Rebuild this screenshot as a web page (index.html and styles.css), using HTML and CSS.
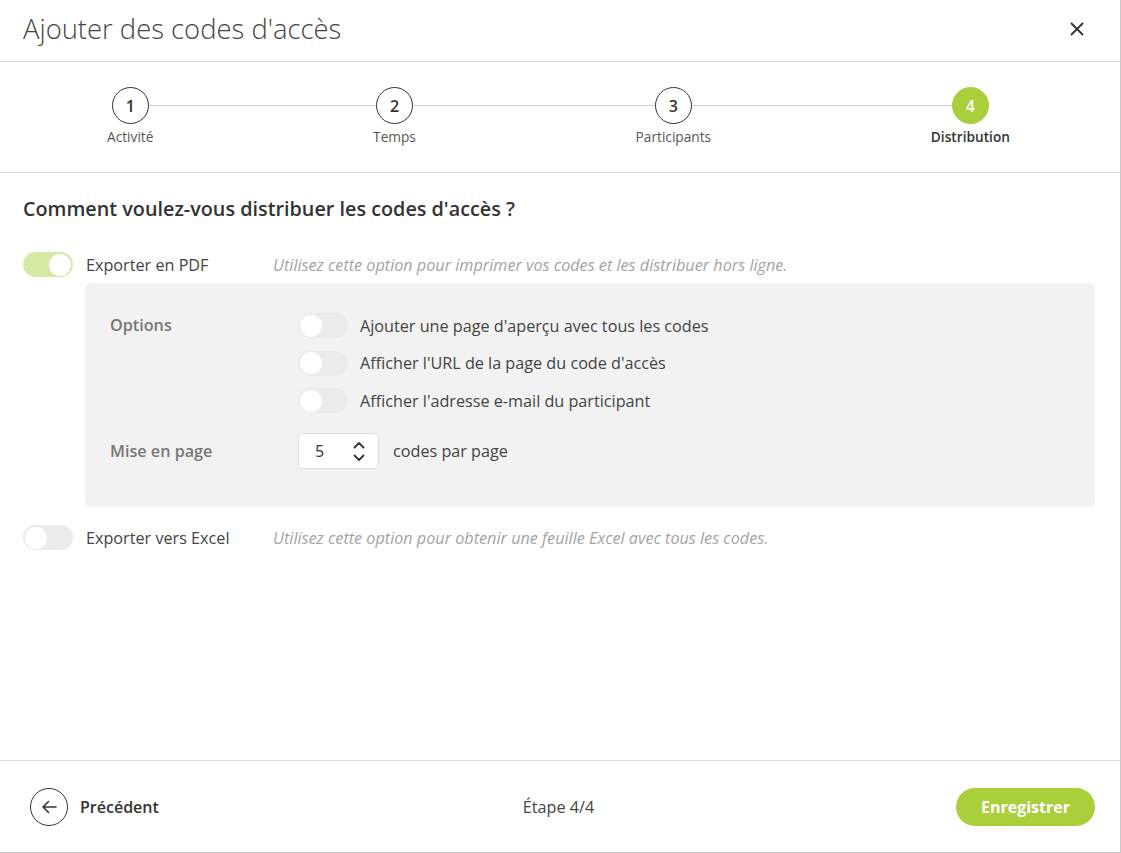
FILE: index.html
```html
<!DOCTYPE html>
<html lang="fr">
<head>
<meta charset="utf-8">
<title>Ajouter des codes d'accès</title>
<link rel="stylesheet" href="styles.css">
</head>
<body>
<div class="modal">
  <header class="modal-header">
    <h1 class="modal-title">Ajouter des codes d'accès</h1>
    <button class="close-btn" aria-label="Fermer">
      <svg width="14" height="14" viewBox="0 0 14 14"><path d="M1.5 1.5 L12.5 12.5 M12.5 1.5 L1.5 12.5" stroke="#333" stroke-width="1.8" stroke-linecap="round" fill="none"/></svg>
    </button>
  </header>

  <nav class="stepper">
    <div class="step"><span class="step-circle">1</span><span class="step-label">Activité</span></div>
    <div class="step"><span class="step-circle">2</span><span class="step-label">Temps</span></div>
    <div class="step"><span class="step-circle">3</span><span class="step-label">Participants</span></div>
    <div class="step step-active"><span class="step-circle">4</span><span class="step-label">Distribution</span></div>
  </nav>

  <main class="content">
    <h2 class="question">Comment voulez-vous distribuer les codes d'accès ?</h2>

    <div class="export-row">
      <span class="toggle toggle-on"><span class="knob"></span></span>
      <span class="export-label">Exporter en PDF</span>
      <span class="export-desc">Utilisez cette option pour imprimer vos codes et les distribuer hors ligne.</span>
    </div>

    <div class="options-box">
      <div class="opt-row">
        <div class="opt-title">Options</div>
        <div class="opt-list">
          <div class="opt-item"><span class="toggle"><span class="knob"></span></span><span>Ajouter une page d'aperçu avec tous les codes</span></div>
          <div class="opt-item"><span class="toggle"><span class="knob"></span></span><span>Afficher l'URL de la page du code d'accès</span></div>
          <div class="opt-item"><span class="toggle"><span class="knob"></span></span><span>Afficher l'adresse e-mail du participant</span></div>
        </div>
      </div>
      <div class="opt-row opt-row-layout">
        <div class="opt-title">Mise en page</div>
        <div class="layout-ctrl">
          <div class="num-input">
            <span class="num-val">5</span>
            <span class="spin">
              <svg width="12" height="8" viewBox="0 0 12 8"><path d="M1.5 6.5 L6 2 L10.5 6.5" stroke="#333" stroke-width="1.8" fill="none" stroke-linecap="round" stroke-linejoin="round"/></svg>
              <svg width="12" height="8" viewBox="0 0 12 8"><path d="M1.5 1.5 L6 6 L10.5 1.5" stroke="#333" stroke-width="1.8" fill="none" stroke-linecap="round" stroke-linejoin="round"/></svg>
            </span>
          </div>
          <span class="per-page">codes par page</span>
        </div>
      </div>
    </div>

    <div class="export-row export-excel">
      <span class="toggle"><span class="knob"></span></span>
      <span class="export-label">Exporter vers Excel</span>
      <span class="export-desc">Utilisez cette option pour obtenir une feuille Excel avec tous les codes.</span>
    </div>
  </main>

  <footer class="modal-footer">
    <div class="back">
      <span class="back-circle">
        <svg width="16" height="14" viewBox="0 0 16 14"><path d="M15 7 H2 M7.5 1.5 L2 7 L7.5 12.5" stroke="#333" stroke-width="1.6" fill="none" stroke-linecap="round" stroke-linejoin="round"/></svg>
      </span>
      <span class="back-label">Précédent</span>
    </div>
    <div class="step-count">Étape 4/4</div>
    <div class="save-wrap"><button class="save-btn">Enregistrer</button></div>
  </footer>
</div>
</body>
</html>
```

FILE: styles.css
```css
* { box-sizing: border-box; }
html, body { margin: 0; padding: 0; background: #fff; }
body {
  font-family: "Open Sans", "Noto Sans", sans-serif;
  color: #444;
}
.modal {
  width: 1121px;
  height: 853px;
  display: flex;
  flex-direction: column;
  border-right: 1px solid #c8c8c8;
  border-bottom: 1px solid #c8c8c8;
  background: #fff;
}
.modal-header {
  height: 62px;
  flex: none;
  display: flex;
  align-items: center;
  justify-content: space-between;
  padding: 0 36px 0 23px;
  border-bottom: 1px solid #d6d6d6;
}
.modal-title {
  margin: 0;
  font-size: 27.4px;
  font-weight: 300;
  color: #444;
  line-height: 1;
  padding-bottom: 4px;
}
.close-btn {
  border: 0;
  background: none;
  padding: 0;
  width: 14px;
  height: 14px;
  display: flex;
  margin-bottom: 4px;
}

.stepper {
  position: relative;
  height: 111px;
  flex: none;
  display: flex;
  justify-content: space-between;
  align-items: flex-start;
  padding: 25px 110px 0 107px;
  border-bottom: 1px solid #d6d6d6;
}
.stepper::before {
  content: "";
  position: absolute;
  left: 130px;
  right: 150px;
  top: 43px;
  height: 1px;
  background: #cfcfcf;
}
.step {
  position: relative;
  display: flex;
  flex-direction: column;
  align-items: center;
}
.step-circle {
  width: 37px;
  height: 37px;
  border-radius: 50%;
  border: 1px solid #333;
  background: #fff;
  display: flex;
  align-items: center;
  justify-content: center;
  font-size: 16px;
  font-weight: 600;
  color: #333;
}
.step-label {
  margin-top: 4px;
  font-size: 13.7px;
  line-height: 18px;
  color: #555;
}
.step-active .step-circle {
  background: #a9cf3b;
  border-color: #a9cf3b;
  color: #fff;
}
.step-active .step-label {
  font-weight: 600;
  color: #333;
}

.content {
  flex: 1;
  padding: 24px 25px 0 23px;
}
.question {
  margin: 0 0 31px;
  font-size: 19.8px;
  line-height: 24px;
  font-weight: 600;
  color: #333;
}
.export-row {
  display: flex;
  align-items: center;
  height: 25px;
}
.toggle {
  position: relative;
  flex: none;
  width: 50px;
  height: 25px;
  border-radius: 13px;
  background: #ebebeb;
  display: flex;
  align-items: center;
  padding: 0 2px;
}
.knob {
  width: 22px;
  height: 22px;
  border-radius: 50%;
  background: #fff;
}
.toggle-on {
  background: #d6e9a4;
  justify-content: flex-end;
}
.export-label {
  width: 187px;
  margin-left: 13px;
  font-size: 16.2px;
  line-height: 22px;
  color: #444;
  flex: none;
}
.export-desc {
  font-size: 16.2px;
  line-height: 22px;
  font-style: italic;
  color: #a3a3a3;
}
.options-box {
  margin: 6px 0 18px 62px;
  background: #f1f2f1;
  border-radius: 6px;
  padding: 30px 25px 38px;
}
.opt-row {
  display: flex;
}
.opt-title {
  width: 188px;
  flex: none;
  font-size: 16.2px;
  font-weight: 600;
  color: #777;
  line-height: 25px;
}
.opt-list {
  display: flex;
  flex-direction: column;
  gap: 12.5px;
}
.opt-item {
  display: flex;
  align-items: center;
  gap: 12px;
  height: 25px;
  font-size: 16.2px;
  line-height: 22px;
  color: #444;
}
.opt-row-layout {
  margin-top: 20px;
  align-items: center;
}
.layout-ctrl {
  display: flex;
  align-items: center;
  gap: 14px;
}
.num-input {
  width: 81px;
  height: 36px;
  background: #fff;
  border: 1px solid #dcdcdc;
  border-radius: 4px;
  display: flex;
  align-items: center;
  justify-content: space-between;
  padding: 0 13px 0 16px;
  font-size: 16px;
  line-height: 22px;
  color: #333;
}
.spin {
  display: flex;
  flex-direction: column;
  gap: 5px;
}
.spin svg { display: block; }
.per-page {
  font-size: 16.2px;
  line-height: 22px;
  color: #444;
}

.modal-footer {
  height: 92px;
  flex: none;
  border-top: 1px solid #d6d6d6;
  display: grid;
  grid-template-columns: 1fr auto 1fr;
  align-items: center;
  padding: 0 25px 0 30px;
}
.back {
  display: flex;
  align-items: center;
  gap: 12px;
}
.back-circle {
  width: 38px;
  height: 38px;
  border-radius: 50%;
  border: 1px solid #333;
  display: flex;
  align-items: center;
  justify-content: center;
}
.back-label {
  font-size: 16px;
  font-weight: 600;
  color: #333;
}
.step-count {
  font-size: 16.2px;
  color: #444;
  padding-right: 8px;
}
.save-wrap {
  display: flex;
  justify-content: flex-end;
}
.save-btn {
  height: 38px;
  width: 139px;
  border: 0;
  border-radius: 19px;
  background: #a9cf3b;
  color: #fff;
  font-family: inherit;
  font-size: 16px;
  font-weight: 700;
  padding: 0;
}
```
